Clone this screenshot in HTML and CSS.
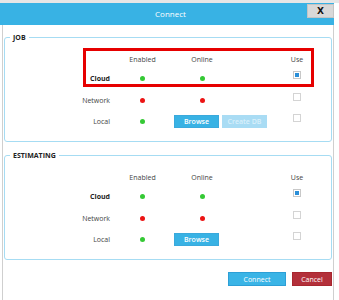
FILE: index.html
```html
<!DOCTYPE html>
<html lang="en">
<head>
  <meta charset="UTF-8">
  <meta name="viewport" content="width=device-width, initial-scale=1.0">
  <title>Connect</title>
  <link rel="stylesheet" href="styles.css">
</head>
<body>
  <div class="topstrip"></div>
  <div class="titlebar">
    <span class="title">Connect</span>
    <span class="close">X</span>
  </div>

  <div class="panel">
    <fieldset class="group">
      <legend>JOB</legend>
      <div class="grid">
        <span></span><span class="head">Enabled</span><span class="head">Online</span><span></span><span class="head">Use</span>

        <span class="label strong">Cloud</span>
        <span class="dot green"></span>
        <span class="dot green"></span>
        <span></span>
        <span class="check checked"></span>

        <span class="label">Network</span>
        <span class="dot red"></span>
        <span class="dot red"></span>
        <span></span>
        <span class="check"></span>

        <span class="label">Local</span>
        <span class="dot green"></span>
        <div class="btns">
          <button class="btn">Browse</button>
          <button class="btn disabled">Create DB</button>
        </div>
        <span class="check"></span>
      </div>
    </fieldset>

    <fieldset class="group">
      <legend>ESTIMATING</legend>
      <div class="grid">
        <span></span><span class="head">Enabled</span><span class="head">Online</span><span></span><span class="head">Use</span>

        <span class="label strong">Cloud</span>
        <span class="dot green"></span>
        <span class="dot green"></span>
        <span></span>
        <span class="check checked"></span>

        <span class="label">Network</span>
        <span class="dot red"></span>
        <span class="dot red"></span>
        <span></span>
        <span class="check"></span>

        <span class="label">Local</span>
        <span class="dot green"></span>
        <div class="btns">
          <button class="btn">Browse</button>
        </div>
        <span class="check"></span>
      </div>
    </fieldset>

    <div class="actions">
      <button class="action connect">Connect</button>
      <button class="action cancel">Cancel</button>
    </div>

    <!-- annotation box round the job cloud row -->
    <div class="highlight"></div>
  </div>
</body>
</html>
```

FILE: styles.css
```css
* {
  box-sizing: border-box;
}

body {
  margin: 0;
  font-family: "Open Sans", sans-serif;
  font-size: 7px;
  color: #333;
  background-color: #ffffff;
}

.topstrip {
  height: 3px;
  background-color: #e6e6e6;
}

.titlebar {
  display: flex;
  width: 334px;
  height: 22px;
  background-color: #38b2e4;
}

.title {
  flex: 1;
  text-align: center;
  padding-left: 34px;
  color: #ffffff;
  font-size: 8px;
  line-height: 22px;
}

.close {
  width: 27px;
  height: 14px;
  margin-top: 1px;
  background-color: #d8d8d8;
  border: 1px solid #c4c4c4;
  color: #111;
  font-family: "DejaVu Sans", sans-serif;
  font-weight: bold;
  font-size: 9px;
  line-height: 12px;
  text-align: center;
}

.panel {
  position: relative;
  margin-left: 2px;
  width: 332px;
  height: 275px;
  border-left: 1px solid #cfcfcf;
  border-right: 1px solid #cfcfcf;
  padding: 8px 1px 0 1px;
}

.group {
  margin: 0;
  padding: 8px 0 9px 0;
  min-width: 0;
  border: 1px solid #a6dcf3;
  border-radius: 3px;
}

.group + .group {
  margin-top: 9px;
}

.group legend {
  margin-left: 5px;
  padding: 0 3px;
  font-weight: bold;
  font-size: 7px;
  line-height: 9px;
  color: #222;
}

.grid {
  display: grid;
  grid-template-columns: 106px 63px 56px 59px 16px;
  grid-template-rows: 18px 21px 22px 21px;
  align-items: center;
  justify-items: center;
}

.head {
  color: #444;
}

.label {
  justify-self: end;
  padding-right: 1px;
  color: #444;
}

.label.strong {
  font-weight: bold;
  color: #222;
}

.dot {
  width: 5px;
  height: 5px;
  border-radius: 50%;
}

.dot.green {
  background-color: #35c935;
}

.dot.red {
  background-color: #ec1414;
}

.check {
  width: 8px;
  height: 8px;
  margin-bottom: 7px;
  border: 1px solid #d4d4d4;
  background-color: #ffffff;
}

.check.checked {
  padding: 1px;
  background-color: #2b8fd8;
  background-clip: content-box;
  border-color: #c8c8c8;
}

.btns {
  grid-column: 3 / 5;
  justify-self: start;
  display: flex;
  gap: 3px;
}

.btn {
  width: 45px;
  height: 13px;
  padding: 0;
  border: 1px solid #3aa9dc;
  background-color: #38b2e4;
  color: #ffffff;
  font-family: "Open Sans", sans-serif;
  font-weight: 600;
  font-size: 7px;
}

.btn.disabled {
  border-color: #a9dcf4;
  background-color: #a9dcf4;
  color: #d9f0fb;
}

.actions {
  display: flex;
  justify-content: flex-end;
  gap: 6px;
  margin-top: 12px;
}

.action {
  height: 14px;
  padding: 0;
  color: #ffffff;
  font-family: "Open Sans", sans-serif;
  font-size: 7px;
}

.connect {
  width: 58px;
  border: 1px solid #2d9fd6;
  background-color: #3ab4e6;
}

.cancel {
  width: 40px;
  border: 1px solid #a8272f;
  background-color: #b3303a;
}

.highlight {
  position: absolute;
  left: 80px;
  top: 23px;
  width: 231px;
  height: 39px;
  border: 3px solid #e60000;
}
```
